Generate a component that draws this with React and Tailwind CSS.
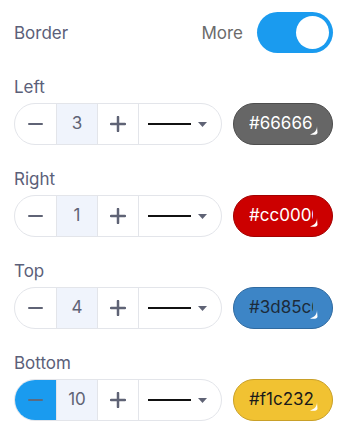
import React from 'react';

const rows = [
  { label: 'Left', value: 3, color: '#666666', fill: 'bg-[#666666]', border: 'border-[#4d4d4d]', text: 'text-white' },
  { label: 'Right', value: 1, color: '#cc0000', fill: 'bg-[#cc0000]', border: 'border-[#a30000]', text: 'text-white' },
  { label: 'Top', value: 4, color: '#3d85c6', fill: 'bg-[#3d85c6]', border: 'border-[#2f6aa0]', text: 'text-[#1c2b3a]' },
  { label: 'Bottom', value: 10, color: '#f1c232', fill: 'bg-[#f1c232]', border: 'border-[#c9a028]', text: 'text-[#1a1a1a]', active: true },
];

const Grip = () => (
  <svg className="absolute right-[14px] bottom-[9px]" width="8" height="9" viewBox="0 0 8 9">
    <path d="M7 0 C7 4 5 7 0 8.5 C3 9 7 9 7.5 7 Z" fill="#ffffff" />
  </svg>
);

const BorderRow = ({ row }) => (
  <div className="flex flex-col gap-[4px]">
    <div className="text-[17px] leading-[24px] text-[#5b6079]">{row.label}</div>
    <div className="flex items-center gap-[11px]">
      <div className="flex h-[42px] w-[208px] rounded-full border border-[#e3e5ea] overflow-hidden bg-white">
        <button className={`w-[41px] flex items-center justify-center ${row.active ? 'bg-[#1a9bef]' : ''}`}>
          <span className={`block w-[15px] h-[2.5px] rounded ${row.active ? 'bg-[#5c6b80]' : 'bg-[#5f6375]'}`} />
        </button>
        <div className="w-[42px] flex items-center justify-center bg-[#f0f4fc] border-x border-[#e3e5ea] text-[17px] text-[#5f6375]">
          {row.value}
        </div>
        <button className="w-[40px] flex items-center justify-center">
          <svg width="16" height="16" viewBox="0 0 16 16">
            <path d="M8 1 V15 M1 8 H15" stroke="#5f6375" strokeWidth="2.5" strokeLinecap="round" />
          </svg>
        </button>
        <div className="flex-1 flex items-center border-l border-[#e3e5ea] pl-[9px] gap-[7px]">
          <span className="block w-[43px] h-[2px] bg-[#111]" />
          <svg width="9" height="5" viewBox="0 0 9 5">
            <path d="M0 0 H9 L4.5 5 Z" fill="#5f6375" />
          </svg>
        </div>
      </div>
      <div className={`relative h-[42px] w-[100px] rounded-full border ${row.fill} ${row.border} flex items-center pl-[15px] pr-[19px]`}>
        <div className={`overflow-hidden whitespace-nowrap text-[17px] ${row.text}`}>{row.color}</div>
        <Grip />
      </div>
    </div>
  </div>
);

export default function App() {
  return (
    <div className="w-[350px] h-[434px] bg-white pl-[14px] pr-[17px] pt-[12px]" style={{ fontFamily: 'Inter, "Noto Sans", sans-serif' }}>
      <div className="flex items-center justify-between h-[41px]">
        <span className="text-[17px] text-[#5b6079] pt-[2px]">Border</span>
        <div className="flex items-center gap-[14px]">
          <span className="text-[17px] text-[#6b6b6b] pt-[2px]">More</span>
          <div className="w-[76px] h-[41px] rounded-full bg-[#1a9bef] flex items-center justify-end pr-[4px]">
            <span className="block w-[33px] h-[33px] rounded-full bg-white" />
          </div>
        </div>
      </div>
      <div className="flex flex-col gap-[22px] mt-[22px]">
        {rows.map((r) => (
          <BorderRow key={r.label} row={r} />
        ))}
      </div>
    </div>
  );
}
